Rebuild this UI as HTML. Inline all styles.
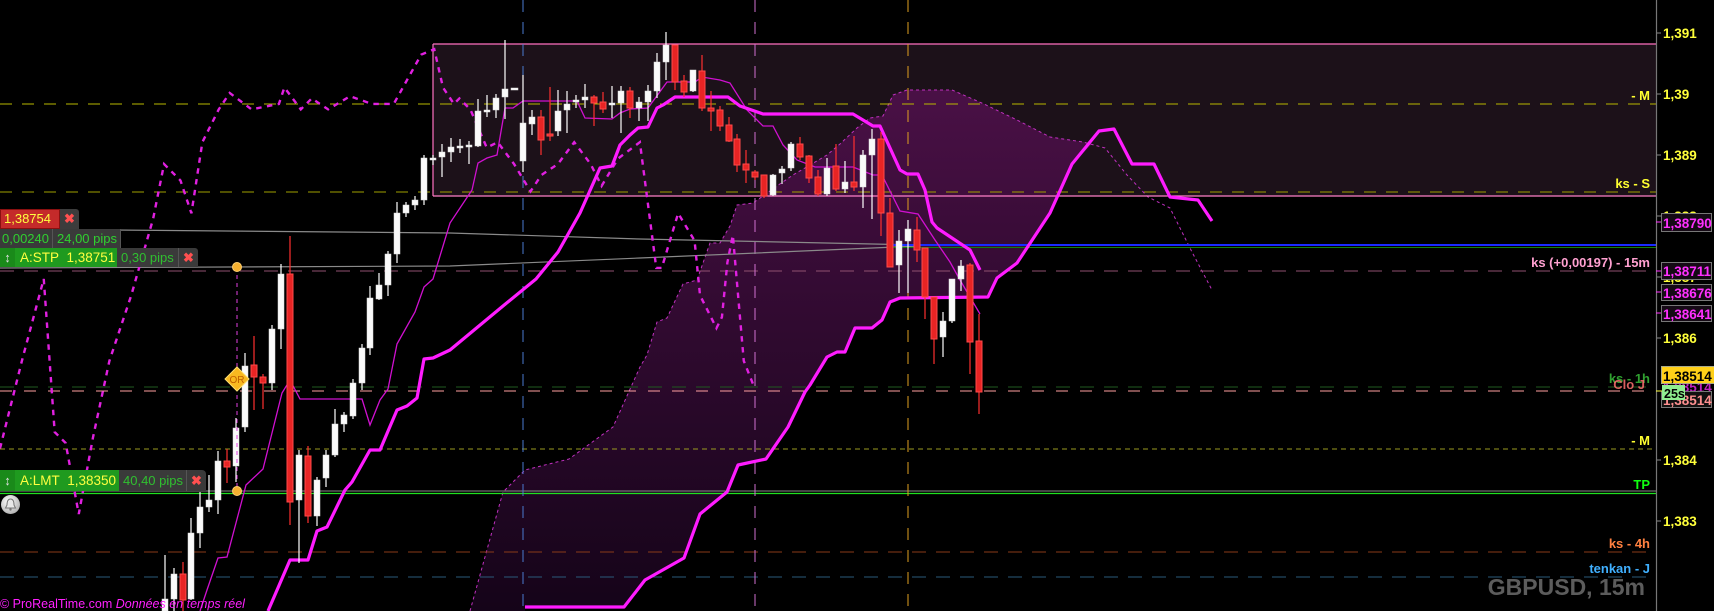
<!DOCTYPE html>
<html><head><meta charset="utf-8"><style>
html,body{margin:0;padding:0;background:#000;}
#c{position:relative;width:1714px;height:611px;overflow:hidden;background:#000;font-family:"Liberation Sans",Arial,sans-serif;}
svg{position:absolute;left:0;top:0;}
.w line{stroke:#fff;stroke-width:1.2}
.w rect{fill:#fafafa;stroke:#ddd;stroke-width:.5}
.r line{stroke:#ff3030;stroke-width:1.2}
.r rect{fill:#e82424;stroke:#ff4a4a;stroke-width:1}
.lbl{font-weight:bold;font-size:13px}
.ax{fill:#ffff3a;font-weight:bold;font-size:13.5px}
.bx{position:absolute;box-sizing:border-box;white-space:nowrap;overflow:hidden;font-size:13px;}
</style></head><body><div id="c">
<svg width="1714" height="611" viewBox="0 0 1714 611">
<defs>
<linearGradient id="cg" x1="0" y1="0" x2="0" y2="1">
<stop offset="0" stop-color="#4c1048"/><stop offset="0.5" stop-color="#300a30"/><stop offset="1" stop-color="#16041a"/>
</linearGradient>
</defs>
<rect x="433" y="44" width="1223" height="152" fill="#1c1119"/>
<polygon fill="url(#cg)" opacity="0.95" points="470,611 503,492 525,470 569,459 613,427 640,367 647,355 657,322 667,318 683,284 697,280 710,243 720,243 730,226 737,205 753,203 763,196 777,186 793,175 827,155 840,144 857,128 870,118 883,116 893,95 907,90 952,90 984,104 1017,120 1050,137 1083,142 1092,144 1072,164 1050,213 1017,263 1000,277 997,278 988,297 900,298 890,302 882,320 872,328 855,328 845,352 837,352 827,357 810,385 805,392 788,427 766,459 738,465 727,492 700,514 684,558 645,580 624,607 525,607 525,611"/>
<polyline fill="none" stroke="#c030c0" stroke-width="1" stroke-dasharray="3 3" points="470,611 503,492 525,470 569,459 613,427 640,367 647,355 657,322 667,318 683,284 697,280 710,243 720,243 730,226 737,205 753,203 763,196 777,186 793,175 827,155 840,144 857,128 870,118 883,116 893,95 907,90 952,90 984,104 1017,120 1050,137 1083,142 1105,148 1127,175 1148,197 1170,208 1192,252 1212,290"/>
<line x1="433" y1="44" x2="1656" y2="44" stroke="#ff70c0" stroke-width="1.2"/>
<line x1="433" y1="44" x2="433" y2="196" stroke="#ff70c0" stroke-width="1.2"/>
<line x1="433" y1="196" x2="1656" y2="196" stroke="#ff80c8" stroke-width="1.2"/>
<line x1="0" y1="104" x2="1656" y2="104" stroke="#b8b800" stroke-dasharray="12 10"/>
<line x1="0" y1="192" x2="1656" y2="192" stroke="#a0a000" stroke-dasharray="12 10"/>
<line x1="0" y1="271" x2="1656" y2="271" stroke="#905070" stroke-dasharray="14 10"/>
<line x1="0" y1="387" x2="1656" y2="387" stroke="#1f5a1f" stroke-dasharray="14 10"/>
<line x1="0" y1="391" x2="1656" y2="391" stroke="#ff9fa0" stroke-dasharray="12 12"/>
<line x1="0" y1="449" x2="1656" y2="449" stroke="#9a9a20" stroke-dasharray="5 4"/>
<line x1="0" y1="491" x2="1656" y2="491" stroke="#888" stroke-width="1"/>
<line x1="0" y1="493.5" x2="1656" y2="493.5" stroke="#20e020" stroke-width="1.2"/>
<line x1="0" y1="552" x2="1656" y2="552" stroke="#8a3a18" stroke-dasharray="14 10"/>
<line x1="0" y1="577" x2="1656" y2="577" stroke="#2a5a7a" stroke-dasharray="14 10"/>
<line x1="523" y1="0" x2="523" y2="611" stroke="#4a7ad0" stroke-dasharray="12 10"/>
<line x1="755" y1="0" x2="755" y2="611" stroke="#d070d0" stroke-dasharray="12 10"/>
<line x1="908" y1="0" x2="908" y2="611" stroke="#e0a020" stroke-dasharray="12 10"/>
<polyline fill="none" stroke="#8a8a8a" stroke-width="1.2" points="0,229 450,233 640,239 920,245"/>
<polyline fill="none" stroke="#8a8a8a" stroke-width="1.2" points="0,268 450,266 640,258 920,246"/>
<line x1="890" y1="245" x2="1656" y2="245" stroke="#1a2aff" stroke-width="2"/>
<line x1="890" y1="247.5" x2="1656" y2="247.5" stroke="#108010" stroke-width="1"/>
<g transform="scale(1.0938)">
<polyline fill="none" stroke="#e020e0" stroke-width="2.2" stroke-dasharray="5 5" points="0,410 20,330 40,255 50,395 60,405 72,470 85,400 100,330 120,270 140,200 150,150 165,165 175,195 185,130 200,100 210,85 230,100 255,95 260,80 275,100 285,90 300,100 320,88 340,95 360,95 385,50 397,45 405,80 415,95 420,90 430,100 445,135 455,130 470,150 485,175 495,160 510,150 525,130 540,150 550,170 565,145 585,130 600,245 605,245 620,195 635,220 640,270 655,300 660,290 665,240 670,215 680,330 690,355"/>
</g>
<polyline fill="none" stroke="#d010d0" stroke-width="1.3" points="200,611 207,590 218,558 227,557 246,485 263,469 282,393 290,380 300,399 362,399 370,425 380,400 388,389 397,344 415,312 424,287 433,279 450,223 472,190 478,163 487,158 497,155 505,108 513,108 523,101 577,101 585,118 612,119 620,113 630,109 648,108 667,82 695,82 702,77 720,80 730,83 747,110 763,126 773,126 783,145 797,160 815,167 853,167 873,175 882,175 900,211 918,214 935,240 950,262 960,280 980,314"/>
<polyline fill="none" stroke="#ff1cff" stroke-width="3.2" stroke-linejoin="round" points="268,611 290,560 308,560 317,531 327,527 345,490 352,482 370,450 380,450 397,410 407,406 417,398 424,359 433,358 450,350 503,306 536,279 558,252 580,213 600,168 612,166 620,145 630,135 638,128 648,127 657,108 663,105 675,97 728,97 740,106 763,114 853,114 873,126 880,126 900,170 907,174 918,174 925,190 932,222 937,228 970,250 980,270"/>
<polyline fill="none" stroke="#ff1cff" stroke-width="3.2" stroke-linejoin="round" points="525,607 624,607 645,580 684,558 700,514 727,492 738,465 766,459 788,427 805,392 810,385 827,357 837,352 845,352 855,328 872,328 882,320 890,302 900,298 988,297 997,278 1017,263 1050,213 1072,164 1099,131 1114,129 1132,164 1154,164 1170,197 1198,200 1212,221"/>
<g class="w"><line x1="165" y1="555" x2="165" y2="611"/><rect x="162" y="599" width="6" height="12"/></g>
<g class="w"><line x1="174" y1="568" x2="174" y2="611"/><rect x="171" y="574" width="6" height="25"/></g>
<g class="r"><line x1="183" y1="562" x2="183" y2="611"/><rect x="180" y="574" width="6" height="26"/></g>
<g class="w"><line x1="191" y1="518" x2="191" y2="600"/><rect x="188" y="533" width="6" height="66"/></g>
<g class="w"><line x1="200" y1="492" x2="200" y2="548"/><rect x="197" y="507" width="6" height="26"/></g>
<g class="w"><line x1="209" y1="475" x2="209" y2="512"/><rect x="206" y="500" width="6" height="7"/></g>
<g class="w"><line x1="218" y1="451" x2="218" y2="514"/><rect x="215" y="461" width="6" height="39"/></g>
<g class="r"><line x1="227" y1="449" x2="227" y2="483"/><rect x="224" y="461" width="6" height="6"/></g>
<g class="w"><line x1="236" y1="418" x2="236" y2="482"/><rect x="233" y="428" width="6" height="38"/></g>
<g class="w"><line x1="245" y1="353" x2="245" y2="432"/><rect x="242" y="366" width="6" height="61"/></g>
<g class="r"><line x1="254" y1="336" x2="254" y2="410"/><rect x="251" y="365" width="6" height="12"/></g>
<g class="r"><line x1="263" y1="374" x2="263" y2="409"/><rect x="260" y="377" width="6" height="6"/></g>
<g class="w"><line x1="272" y1="325" x2="272" y2="390"/><rect x="269" y="329" width="6" height="54"/></g>
<g class="w"><line x1="281" y1="264" x2="281" y2="349"/><rect x="278" y="274" width="6" height="55"/></g>
<g class="r"><line x1="290" y1="236" x2="290" y2="525"/><rect x="287" y="274" width="6" height="228"/></g>
<g class="w"><line x1="299" y1="450" x2="299" y2="563"/><rect x="296" y="455" width="6" height="45"/></g>
<g class="r"><line x1="308" y1="446" x2="308" y2="523"/><rect x="305" y="456" width="6" height="60"/></g>
<g class="w"><line x1="317" y1="477" x2="317" y2="526"/><rect x="314" y="480" width="6" height="36"/></g>
<g class="w"><line x1="326" y1="450" x2="326" y2="487"/><rect x="323" y="455" width="6" height="23"/></g>
<g class="w"><line x1="335" y1="409" x2="335" y2="457"/><rect x="332" y="424" width="6" height="31"/></g>
<g class="w"><line x1="344" y1="412" x2="344" y2="432"/><rect x="341" y="415" width="6" height="9"/></g>
<g class="w"><line x1="353" y1="379" x2="353" y2="419"/><rect x="350" y="383" width="6" height="33"/></g>
<g class="w"><line x1="362" y1="344" x2="362" y2="390"/><rect x="359" y="348" width="6" height="35"/></g>
<g class="w"><line x1="370" y1="286" x2="370" y2="355"/><rect x="367" y="298" width="6" height="50"/></g>
<g class="w"><line x1="379" y1="273" x2="379" y2="300"/><rect x="376" y="285" width="6" height="14"/></g>
<g class="w"><line x1="388" y1="251" x2="388" y2="296"/><rect x="385" y="254" width="6" height="31"/></g>
<g class="w"><line x1="397" y1="202" x2="397" y2="263"/><rect x="394" y="213" width="6" height="41"/></g>
<g class="w"><line x1="406" y1="202" x2="406" y2="217"/><rect x="403" y="205" width="6" height="8"/></g>
<g class="w"><line x1="415" y1="196" x2="415" y2="210"/><rect x="412" y="200" width="6" height="5"/></g>
<g class="w"><line x1="424" y1="155" x2="424" y2="205"/><rect x="421" y="158" width="6" height="42"/></g>
<g class="w"><line x1="433" y1="155" x2="433" y2="165"/><rect x="430" y="158" width="6" height="2"/></g>
<g class="w"><line x1="442" y1="144" x2="442" y2="177"/><rect x="439" y="152" width="6" height="5"/></g>
<g class="w"><line x1="451" y1="138" x2="451" y2="162"/><rect x="448" y="147" width="6" height="5"/></g>
<g class="w"><line x1="460" y1="139" x2="460" y2="153"/><rect x="457" y="146" width="6" height="2"/></g>
<g class="w"><line x1="469" y1="141" x2="469" y2="164"/><rect x="466" y="145" width="6" height="2"/></g>
<g class="w"><line x1="478" y1="99" x2="478" y2="147"/><rect x="475" y="111" width="6" height="35"/></g>
<g class="w"><line x1="487" y1="95" x2="487" y2="117"/><rect x="484" y="110" width="6" height="2"/></g>
<g class="w"><line x1="496" y1="94" x2="496" y2="118"/><rect x="493" y="98" width="6" height="12"/></g>
<g class="w"><line x1="505" y1="40" x2="505" y2="119"/><rect x="502" y="89" width="6" height="8"/></g>
<g class="w"><rect x="511" y="88" width="7" height="2"/></g>
<g class="w"><line x1="523" y1="75" x2="523" y2="172"/><rect x="520" y="123" width="6" height="38"/></g>
<g class="w"><line x1="532" y1="110" x2="532" y2="135"/><rect x="529" y="117" width="6" height="7"/></g>
<g class="r"><line x1="541" y1="110" x2="541" y2="155"/><rect x="538" y="117" width="6" height="23"/></g>
<g class="r"><line x1="550" y1="87" x2="550" y2="141"/><rect x="547" y="134" width="6" height="2"/></g>
<g class="w"><line x1="558" y1="90" x2="558" y2="136"/><rect x="555" y="111" width="6" height="20"/></g>
<g class="w"><line x1="567" y1="91" x2="567" y2="133"/><rect x="564" y="104" width="6" height="6"/></g>
<g class="w"><line x1="576" y1="95" x2="576" y2="108"/><rect x="573" y="100" width="6" height="2"/></g>
<g class="w"><line x1="585" y1="84" x2="585" y2="108"/><rect x="582" y="97" width="6" height="3"/></g>
<g class="r"><line x1="594" y1="95" x2="594" y2="126"/><rect x="591" y="97" width="6" height="6"/></g>
<g class="r"><line x1="603" y1="92" x2="603" y2="113"/><rect x="600" y="102" width="6" height="7"/></g>
<g class="w"><line x1="612" y1="86" x2="612" y2="118"/><rect x="609" y="103" width="6" height="2"/></g>
<g class="w"><line x1="621" y1="86" x2="621" y2="133"/><rect x="618" y="91" width="6" height="12"/></g>
<g class="r"><line x1="630" y1="87" x2="630" y2="118"/><rect x="627" y="91" width="6" height="17"/></g>
<g class="w"><line x1="639" y1="97" x2="639" y2="121"/><rect x="636" y="102" width="6" height="6"/></g>
<g class="w"><line x1="648" y1="85" x2="648" y2="121"/><rect x="645" y="91" width="6" height="11"/></g>
<g class="w"><line x1="657" y1="53" x2="657" y2="98"/><rect x="654" y="62" width="6" height="29"/></g>
<g class="w"><line x1="666" y1="32" x2="666" y2="80"/><rect x="663" y="45" width="6" height="17"/></g>
<g class="r"><line x1="675" y1="45" x2="675" y2="90"/><rect x="672" y="45" width="6" height="37"/></g>
<g class="r"><line x1="684" y1="75" x2="684" y2="97"/><rect x="681" y="81" width="6" height="11"/></g>
<g class="w"><line x1="693" y1="70" x2="693" y2="92"/><rect x="690" y="70" width="6" height="21"/></g>
<g class="r"><line x1="702" y1="55" x2="702" y2="111"/><rect x="699" y="71" width="6" height="37"/></g>
<g class="r"><line x1="711" y1="91" x2="711" y2="131"/><rect x="708" y="108" width="6" height="3"/></g>
<g class="r"><line x1="720" y1="106" x2="720" y2="131"/><rect x="717" y="110" width="6" height="16"/></g>
<g class="r"><line x1="729" y1="117" x2="729" y2="142"/><rect x="726" y="125" width="6" height="16"/></g>
<g class="r"><line x1="737" y1="134" x2="737" y2="172"/><rect x="734" y="139" width="6" height="26"/></g>
<g class="r"><line x1="746" y1="150" x2="746" y2="183"/><rect x="743" y="164" width="6" height="6"/></g>
<g class="r"><line x1="755" y1="170" x2="755" y2="180"/><rect x="752" y="172" width="6" height="5"/></g>
<g class="r"><line x1="764" y1="175" x2="764" y2="198"/><rect x="761" y="175" width="6" height="21"/></g>
<g class="w"><line x1="773" y1="174" x2="773" y2="196"/><rect x="770" y="175" width="6" height="20"/></g>
<g class="w"><line x1="782" y1="166" x2="782" y2="184"/><rect x="779" y="169" width="6" height="4"/></g>
<g class="w"><line x1="791" y1="142" x2="791" y2="171"/><rect x="788" y="144" width="6" height="24"/></g>
<g class="r"><line x1="800" y1="137" x2="800" y2="160"/><rect x="797" y="144" width="6" height="13"/></g>
<g class="r"><line x1="809" y1="155" x2="809" y2="183"/><rect x="806" y="156" width="6" height="22"/></g>
<g class="r"><line x1="818" y1="170" x2="818" y2="196"/><rect x="815" y="177" width="6" height="17"/></g>
<g class="w"><line x1="827" y1="158" x2="827" y2="196"/><rect x="824" y="168" width="6" height="26"/></g>
<g class="r"><line x1="836" y1="144" x2="836" y2="191"/><rect x="833" y="166" width="6" height="23"/></g>
<g class="w"><line x1="845" y1="161" x2="845" y2="193"/><rect x="842" y="182" width="6" height="7"/></g>
<g class="r"><line x1="854" y1="136" x2="854" y2="191"/><rect x="851" y="182" width="6" height="5"/></g>
<g class="w"><line x1="863" y1="150" x2="863" y2="208"/><rect x="860" y="155" width="6" height="32"/></g>
<g class="w"><line x1="872" y1="129" x2="872" y2="219"/><rect x="869" y="139" width="6" height="16"/></g>
<g class="r"><line x1="881" y1="132" x2="881" y2="236"/><rect x="878" y="139" width="6" height="74"/></g>
<g class="r"><line x1="890" y1="198" x2="890" y2="267"/><rect x="887" y="213" width="6" height="54"/></g>
<g class="w"><line x1="899" y1="230" x2="899" y2="293"/><rect x="896" y="241" width="6" height="24"/></g>
<g class="w"><line x1="908" y1="220" x2="908" y2="293"/><rect x="905" y="229" width="6" height="12"/></g>
<g class="r"><line x1="917" y1="217" x2="917" y2="262"/><rect x="914" y="230" width="6" height="20"/></g>
<g class="r"><line x1="925" y1="249" x2="925" y2="319"/><rect x="922" y="248" width="6" height="49"/></g>
<g class="r"><line x1="934" y1="297" x2="934" y2="364"/><rect x="931" y="297" width="6" height="42"/></g>
<g class="w"><line x1="943" y1="312" x2="943" y2="357"/><rect x="940" y="321" width="6" height="16"/></g>
<g class="w"><line x1="952" y1="279" x2="952" y2="323"/><rect x="949" y="279" width="6" height="42"/></g>
<g class="w"><line x1="961" y1="260" x2="961" y2="291"/><rect x="958" y="266" width="6" height="13"/></g>
<g class="r"><line x1="970" y1="263" x2="970" y2="374"/><rect x="967" y="265" width="6" height="77"/></g>
<g class="r"><line x1="979" y1="314" x2="979" y2="414"/><rect x="976" y="341" width="6" height="51"/></g>

<line x1="237" y1="267" x2="237" y2="491" stroke="#e040e0" stroke-dasharray="4 4"/>
<circle cx="237" cy="267" r="4.5" fill="#f5b030" stroke="#ffd070"/>
<circle cx="237" cy="491" r="4.5" fill="#f5b030" stroke="#ffd070"/>
<polygon points="237,367 249,379 237,391 225,379" fill="#f8b820" stroke="#ffe070"/>
<text x="237" y="383" text-anchor="middle" font-size="10" fill="#c06000" font-family="Liberation Sans">OR</text>

<g class="lbl" text-anchor="end">
<text x="1650" y="100" fill="#ffff30">- M</text>
<text x="1650" y="188" fill="#ffff30">ks - S</text>
<text x="1650" y="267" fill="#ffa0d0">ks (+0,00197) - 15m</text>
<text x="1650" y="383" fill="#30a030">ks - 1h</text>
<text x="1645" y="389" fill="#ff7070" opacity="0.85">Clo J</text>
<text x="1650" y="445" fill="#ffff30">- M</text>
<text x="1650" y="489" fill="#10ff10">TP</text>
<text x="1650" y="548" fill="#ff8040">ks - 4h</text>
<text x="1650" y="573" fill="#40b0ff">tenkan - J</text>
</g>
<text x="1645" y="595" text-anchor="end" fill="#5c5c5c" font-size="23" font-weight="bold" font-family="Liberation Sans">GBPUSD, 15m</text>
<text x="0" y="608" font-size="12.5" fill="#ff20ff" font-family="Liberation Sans">© ProRealTime.com <tspan font-style="italic">Données en temps réel</tspan></text>

<rect x="1657" y="0" width="57" height="611" fill="#000"/>
<line x1="1656.5" y1="0" x2="1656.5" y2="611" stroke="#777" stroke-width="1.2"/>
<g stroke="#888"><line x1="1657" y1="33" x2="1661" y2="33"/><line x1="1657" y1="94" x2="1661" y2="94"/><line x1="1657" y1="155" x2="1661" y2="155"/><line x1="1657" y1="216" x2="1661" y2="216"/><line x1="1657" y1="277" x2="1661" y2="277"/><line x1="1657" y1="338" x2="1661" y2="338"/><line x1="1657" y1="460" x2="1661" y2="460"/><line x1="1657" y1="521" x2="1661" y2="521"/></g>
<text class="ax" x="1663" y="38">1,391</text>
<text class="ax" x="1663" y="99">1,39</text>
<text class="ax" x="1663" y="160">1,389</text>
<text class="ax" x="1663" y="221">1,388</text>
<text class="ax" x="1663" y="282">1,387</text>
<text class="ax" x="1663" y="343">1,386</text>
<text class="ax" x="1663" y="465">1,384</text>
<text class="ax" x="1663" y="526">1,383</text>
<g font-weight="bold" font-size="13.5" font-family="Liberation Sans">
<line x1="1656" y1="222" x2="1662" y2="222" stroke="#ff30ff"/>
<rect x="1661.5" y="213.5" width="50" height="18" fill="#150a15" stroke="#777"/><text x="1663" y="228" fill="#ff30ff">1,38790</text>
<line x1="1656" y1="271" x2="1662" y2="271" stroke="#ff30ff"/>
<rect x="1661.5" y="262.5" width="50" height="17" fill="#150a15" stroke="#777"/><text x="1663" y="276" fill="#ff30ff">1,38711</text>
<line x1="1656" y1="292" x2="1662" y2="292" stroke="#ff30ff"/>
<rect x="1661.5" y="284.5" width="50" height="16" fill="#150a15" stroke="#777"/><text x="1663" y="298" fill="#ff30ff">1,38676</text>
<line x1="1656" y1="313" x2="1662" y2="313" stroke="#ff30ff"/>
<rect x="1661.5" y="305.5" width="50" height="16" fill="#150a15" stroke="#777"/><text x="1663" y="319" fill="#ff30ff">1,38641</text>
<text x="1663" y="392" fill="#c020c0">1,38514</text>
<rect x="1661.5" y="391.5" width="50" height="16" fill="#111" stroke="#777"/><text x="1663" y="405" fill="#ff9090">1,38514</text>
<rect x="1661.5" y="366.5" width="53" height="17" fill="#ffd018" stroke="#aa8"/><text x="1663" y="381" fill="#000">1,38514</text>
<line x1="1656" y1="391" x2="1662" y2="391" stroke="#ffff40"/>
<rect x="1662" y="385" width="23" height="15" fill="#90ee90"/><text x="1664" y="398" fill="#000" font-size="12.5">25s</text>
</g>
</svg>

<!-- left widgets -->
<div class="bx" style="left:0;top:209px;width:60px;height:20px;background:#c42a2a;border:1px solid #8a1010;color:#ffff40;line-height:18px;padding-left:3px;">1,38754</div>
<div class="bx" style="left:60px;top:209px;width:19px;height:20px;background:#3c3c3c;border-radius:0 3px 0 0;color:#ff5050;line-height:20px;text-align:center;font-weight:bold">✖</div>
<div class="bx" style="left:0;top:229px;width:53px;height:19px;background:#3a3a3a;color:#30d030;line-height:19px;padding-left:2px;border-right:1px solid #555">0,00240</div>
<div class="bx" style="left:53px;top:229px;width:68px;height:19px;background:#3a3a3a;color:#30d030;line-height:19px;padding-left:4px;border-right:1px solid #555">24,00 pips</div>
<div class="bx" style="left:0;top:248px;width:15px;height:19px;background:#1a8a1a;color:#ddd;line-height:19px;text-align:center;font-weight:bold">↕</div>
<div class="bx" style="left:15px;top:248px;width:102px;height:19px;background:#1f9a1f;color:#ffff40;line-height:19px;padding-left:5px;font-size:13.5px;">A:STP&nbsp;&nbsp;1,38751</div>
<div class="bx" style="left:117px;top:248px;width:61px;height:19px;background:#3a3a3a;color:#30c030;line-height:19px;padding-left:4px">0,30 pips</div>
<div class="bx" style="left:178px;top:248px;width:20px;height:19px;background:#3a3a3a;border-left:1px solid #555;border-radius:0 3px 0 0;color:#ff5050;line-height:19px;text-align:center;font-weight:bold">✖</div>

<div class="bx" style="left:0;top:470px;width:15px;height:21px;background:#1a8a1a;color:#ddd;line-height:21px;text-align:center;font-weight:bold">↕</div>
<div class="bx" style="left:15px;top:470px;width:104px;height:21px;background:#1f9a1f;color:#ffff40;line-height:21px;padding-left:5px;font-size:13.5px;">A:LMT&nbsp;&nbsp;1,38350</div>
<div class="bx" style="left:119px;top:470px;width:67px;height:21px;background:#3a3a3a;color:#30c030;line-height:21px;padding-left:4px">40,40 pips</div>
<div class="bx" style="left:186px;top:470px;width:20px;height:21px;background:#3a3a3a;border-left:1px solid #555;border-radius:0 4px 0 0;color:#ff5050;line-height:21px;text-align:center;font-weight:bold">✖</div>
<div style="position:absolute;left:1px;top:495px;width:19px;height:19px;border-radius:50%;background:radial-gradient(circle at 40% 35%,#fff,#9a9a9a);"><svg width="19" height="19" viewBox="0 0 19 19" style="position:absolute;left:0;top:0"><path d="M9.5 4 C6.5 4 6 7 6 10 L4.5 13 L14.5 13 L13 10 C13 7 12.5 4 9.5 4 Z" fill="#e8e8e8" stroke="#777" stroke-width="1"/><circle cx="9.5" cy="14.5" r="1.2" fill="#777"/></svg></div>
</div></body></html>
